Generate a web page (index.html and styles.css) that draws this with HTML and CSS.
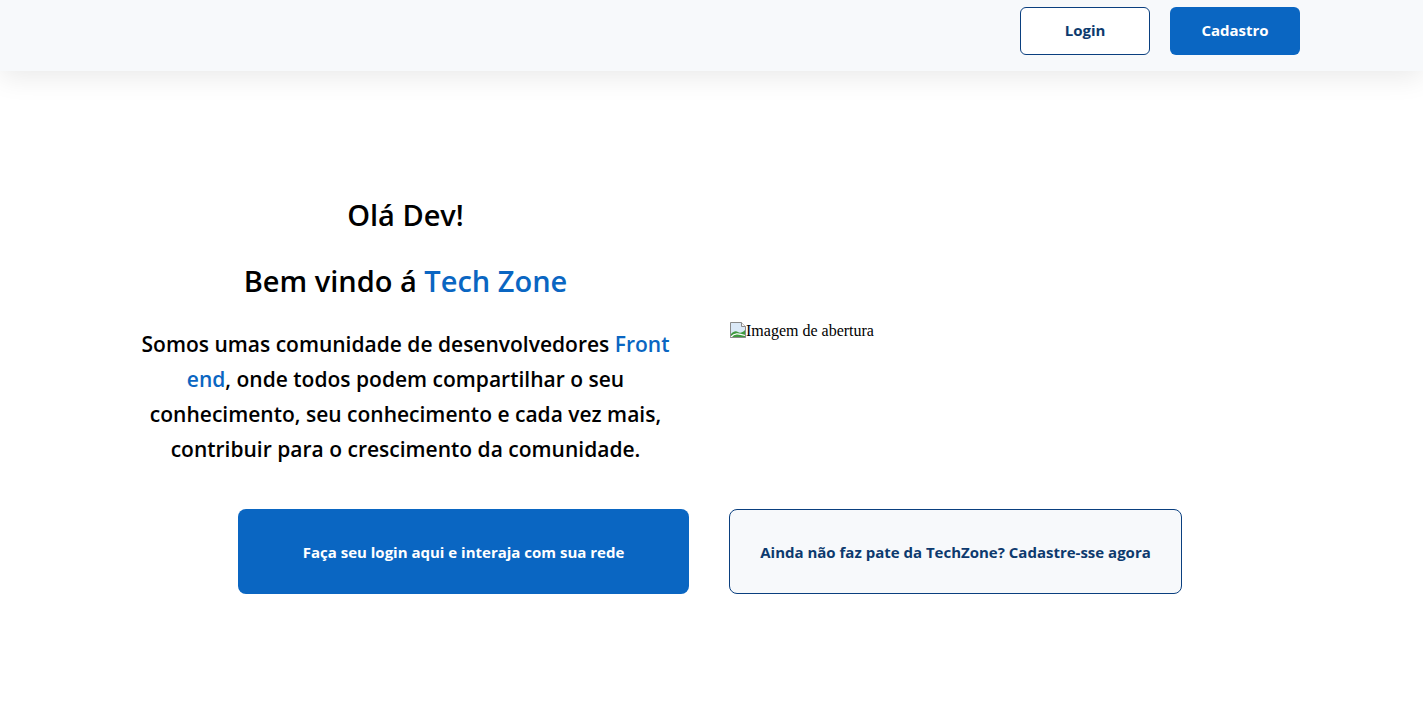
FILE: index.html
```html
<!DOCTYPE html>
<html lang="pt-BR">
<head>
<meta charset="utf-8">
<title>Tech Zone</title>
<link rel="stylesheet" href="styles.css">
</head>
<body>
<header class="topbar">
  <nav class="topbar-actions">
    <a class="btn btn-outline" href="#">Login</a>
    <a class="btn btn-primary" href="#">Cadastro</a>
  </nav>
</header>
<main class="main">
  <section class="hero">
    <div class="hero-text">
      <h1 class="hero-title">Olá Dev!</h1>
      <h2 class="hero-title">Bem vindo á <span class="accent">Tech Zone</span></h2>
      <p class="hero-desc">Somos umas comunidade de desenvolvedores <span class="accent">Front end</span>, onde todos podem compartilhar o seu conhecimento, seu conhecimento e cada vez mais, contribuir para o crescimento da comunidade.</p>
    </div>
    <div class="hero-image">
      <span class="broken-img"><svg class="broken-icon" width="16" height="16" viewBox="0 0 16 16"><path d="M0.5 0.5h11l4 4v11h-15z" fill="#dbe9f7" stroke="#8a8a8a"/><path d="M11.5 0.5v4h4" fill="#f4f4f4" stroke="#8a8a8a"/><path d="M1 15V12c2.5-3 5-3.5 7-2s4.5 0.5 7-2V15z" fill="#3f9a3f"/><path d="M1 15c3.5-4 7-4 14-1.5" fill="none" stroke="#ffffff" stroke-width="1.3"/><path d="M0.5 15.5h15" stroke="#8a8a8a"/></svg>Imagem de abertura</span>
    </div>
  </section>
  <section class="cta-row">
    <a class="cta cta-primary" href="#">Faça seu login aqui e interaja com sua rede</a>
    <a class="cta cta-outline" href="#">Ainda não faz pate da TechZone? Cadastre-sse agora</a>
  </section>
</main>
</body>
</html>
```

FILE: styles.css
```css
* { box-sizing: border-box; }
html, body { margin: 0; padding: 0; }
body {
  background: #ffffff;
  font-family: "Open Sans", "Lato", sans-serif;
  color: #000;
}
a { text-decoration: none; }

.topbar {
  height: 71px;
  background: #f7f9fb;
  box-shadow: 0 6px 28px rgba(0, 0, 0, 0.09);
  display: flex;
  justify-content: flex-end;
  align-items: center;
  padding-right: 123px;
  position: relative;
  z-index: 1;
}
.topbar-actions {
  display: flex;
  gap: 20px;
  margin-top: -9px;
}
.btn {
  width: 130px;
  height: 48px;
  border-radius: 6px;
  display: flex;
  align-items: center;
  justify-content: center;
  font-weight: 700;
  font-size: 15px;
  padding-bottom: 2px;
}
.btn-outline {
  border: 1px solid #0a3f7f;
  color: #0d3a6e;
  background: #ffffff;
}
.btn-primary {
  background: #0a66c2;
  color: #ffffff;
}

.main {
  padding-top: 126px;
}
.hero {
  width: 1163px;
  margin: 0 auto;
  display: grid;
  grid-template-columns: 551px 1fr;
  column-gap: 49px;
  align-items: center;
}
.hero-text {
  text-align: center;
}
.hero-title {
  font-size: 29px;
  font-weight: 600;
  line-height: 36px;
  margin: 0 0 30px;
}
.hero-title + .hero-title { margin-bottom: 28px; }
.accent { color: #0a66c2; }
.hero-desc {
  font-size: 21px;
  font-weight: 600;
  line-height: 35px;
  margin: 0;
}
.hero-image {
  font-family: "Liberation Serif", serif;
  font-size: 16px;
}
.broken-img {
  display: inline-flex;
  align-items: flex-end;
}
.broken-icon {
  flex-shrink: 0;
  margin-bottom: 2px;
}

.cta-row {
  display: flex;
  justify-content: center;
  gap: 40px;
  margin-top: 42px;
  padding-right: 3px;
}
.cta {
  height: 85px;
  border-radius: 8px;
  display: flex;
  align-items: center;
  justify-content: center;
  font-size: 15px;
  font-weight: 700;
}
.cta-primary {
  width: 451px;
  background: #0a66c2;
  color: #ffffff;
}
.cta-outline {
  width: 453px;
  background: #f7f9fb;
  border: 1px solid #0a3f7f;
  color: #0d3a6e;
}
```
